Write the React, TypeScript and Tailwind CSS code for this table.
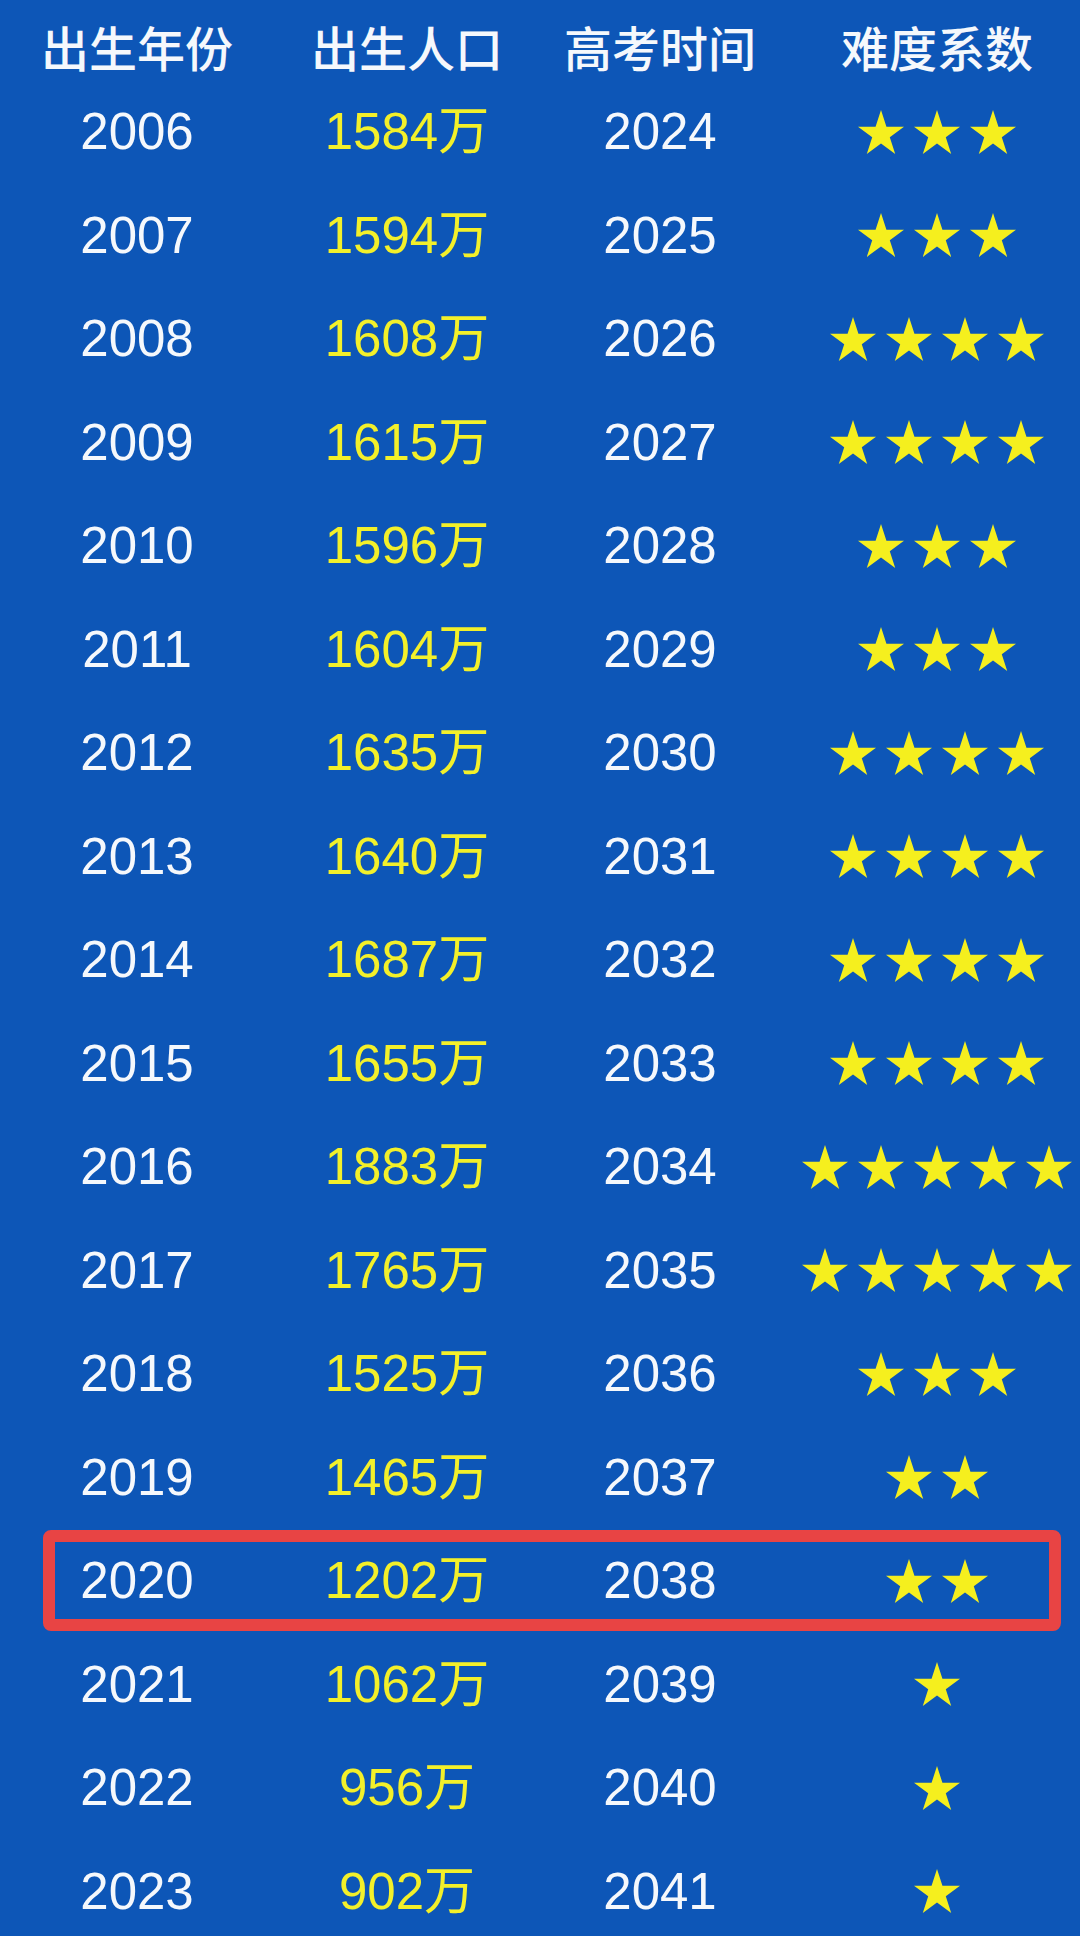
import React from 'react'

interface Row {
  birthYear: number
  births: number
  examYear: number
  stars: number
}

const rows: Row[] = [
  { birthYear: 2006, births: 1584, examYear: 2024, stars: 3 },
  { birthYear: 2007, births: 1594, examYear: 2025, stars: 3 },
  { birthYear: 2008, births: 1608, examYear: 2026, stars: 4 },
  { birthYear: 2009, births: 1615, examYear: 2027, stars: 4 },
  { birthYear: 2010, births: 1596, examYear: 2028, stars: 3 },
  { birthYear: 2011, births: 1604, examYear: 2029, stars: 3 },
  { birthYear: 2012, births: 1635, examYear: 2030, stars: 4 },
  { birthYear: 2013, births: 1640, examYear: 2031, stars: 4 },
  { birthYear: 2014, births: 1687, examYear: 2032, stars: 4 },
  { birthYear: 2015, births: 1655, examYear: 2033, stars: 4 },
  { birthYear: 2016, births: 1883, examYear: 2034, stars: 5 },
  { birthYear: 2017, births: 1765, examYear: 2035, stars: 5 },
  { birthYear: 2018, births: 1525, examYear: 2036, stars: 3 },
  { birthYear: 2019, births: 1465, examYear: 2037, stars: 2 },
  { birthYear: 2020, births: 1202, examYear: 2038, stars: 2 },
  { birthYear: 2021, births: 1062, examYear: 2039, stars: 1 },
  { birthYear: 2022, births: 956, examYear: 2040, stars: 1 },
  { birthYear: 2023, births: 902, examYear: 2041, stars: 1 },
]

// the row that gets the red frame
const highlightYear = 2020

const headers = ['出生年份', '出生人口', '高考时间', '难度系数']

function Star() {
  return (
    <svg viewBox="2.45 0 95.1 90.45" className="w-[46px] h-[44px]">
      <polygon
        points="50,0 61.23,34.55 97.55,34.55 68.17,55.9 79.39,90.45 50,69.1 20.61,90.45 31.83,55.9 2.45,34.55 38.77,34.55"
        fill="#f5ef1e"
      />
    </svg>
  )
}

export default function App() {
  const grid = 'grid grid-cols-[274px_266px_240px_1fr]'

  return (
    <div
      className="w-[1080px] h-[1936px] overflow-hidden bg-[#0d56b7]"
      style={{ fontFamily: '"Liberation Sans", "Noto Sans CJK SC", sans-serif' }}
    >
      {/* Header */}
      <div
        className={`${grid} h-[80px] pt-[22px] text-[48px] leading-none font-medium text-[#f5f8fc]`}
        style={{ fontFamily: '"Noto Sans CJK SC", sans-serif' }}
      >
        {headers.map((h, i) => (
          <div key={h} className={`text-center ${i === 3 ? 'pl-[14px]' : ''}`}>
            {h}
          </div>
        ))}
      </div>

      {/* Rows */}
      {rows.map(row => (
        <div key={row.birthYear} className={`${grid} relative h-[103.5px] items-center text-[51px] leading-none`}>
          <div className="text-center text-[#f5f8fc]">{row.birthYear}</div>
          <div className="text-center text-[#f3f02a]">{row.births}万</div>
          <div className="text-center text-[#f5f8fc]">{row.examYear}</div>
          <div className="flex justify-center gap-[10px] pl-[14px]">
            {Array.from({ length: row.stars }).map((_, i) => (
              <Star key={i} />
            ))}
          </div>

          {row.birthYear === highlightYear && (
            <div className="pointer-events-none absolute left-[43px] right-[19px] top-[1px] bottom-[2px] border-[12px] border-[#e84444] rounded-[8px]" />
          )}
        </div>
      ))}
    </div>
  )
}
